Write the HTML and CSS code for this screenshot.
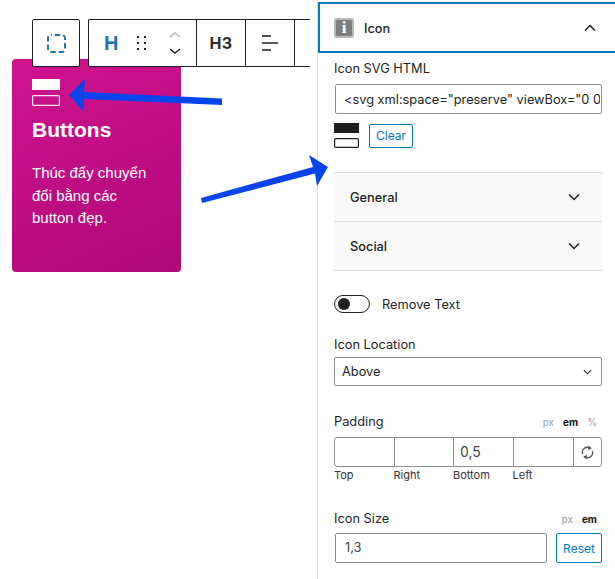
FILE: index.html
```html
<!DOCTYPE html>
<html lang="vi">
<head>
<meta charset="utf-8">
<title>Buttons</title>
<link rel="stylesheet" href="styles.css">
</head>
<body>
<div class="page">
  <main class="canvas">
    <div class="toolbar">
      <div class="tb-group tb-single">
        <svg class="tb-select" viewBox="0 0 19 19" width="19" height="19"><rect x="1" y="1" width="17" height="17" rx="3" fill="none" stroke="#2271b1" stroke-width="2" stroke-dasharray="5.4 3" stroke-dashoffset="4.600"/></svg>
      </div>
      <div class="tb-group tb-main">
        <div class="tb-cell tb-block">
          <span class="tb-h">H</span>
          <svg class="tb-drag" viewBox="0 0 10 14" width="10" height="14"><g fill="#1e1e1e"><rect x="0" y="0" width="2" height="2"/><rect x="7" y="0" width="2" height="2"/><rect x="0" y="6" width="2" height="2"/><rect x="7" y="6" width="2" height="2"/><rect x="0" y="12" width="2" height="2"/><rect x="7" y="12" width="2" height="2"/></g></svg>
          <svg class="tb-move" viewBox="0 0 12 24" width="12" height="24"><path d="M1 6l5-4 5 4" fill="none" stroke="#b4b4b4" stroke-width="1.4"/><path d="M1 18l5 4 5-4" fill="none" stroke="#1e1e1e" stroke-width="1.4"/></svg>
        </div>
        <div class="tb-cell tb-level">H3</div>
        <div class="tb-cell tb-align">
          <svg viewBox="0 0 16 16" width="16" height="16"><path d="M0 1h9M0 8h16M0 15h9" fill="none" stroke="#555" stroke-width="2"/></svg>
        </div>
        <div class="tb-cell tb-rest"></div>
      </div>
    </div>
    <article class="card">
      <svg class="card-icon" viewBox="0 0 28 27" width="28" height="27"><rect x="0" y="0" width="28" height="11" fill="#fff"/><rect x=".6" y="16.600" width="26.8" height="9.8" rx="1" fill="none" stroke="#fff" stroke-width="1.2" opacity=".9"/></svg>
      <h3 class="card-title">Buttons</h3>
      <p class="card-text">Thúc đẩy chuyển đổi bằng các button đẹp.</p>
    </article>
    <svg class="arrows" viewBox="0 0 340 280" width="340" height="280">
      <path d="M222 98.500L84 92L85 79L69 95L83 111L84 99L222 105Z" fill="#0645ea"/>
      <path d="M201 198L313 167L309 155L328 167L317 186L315 173.500L202 203Z" fill="#0645ea"/>
    </svg>
  </main>
  <aside class="sidebar">
    <header class="panel-head">
      <span class="panel-icon">i</span>
      <span class="panel-title">Icon</span>
      <svg class="chev" viewBox="0 0 12 8" width="12" height="8"><path d="M1 6.5l5-5 5 5" fill="none" stroke="#1e1e1e" stroke-width="1.5"/></svg>
    </header>
    <div class="panel-body">
      <label class="label first" for="svg-html">Icon SVG HTML</label>
      <input id="svg-html" class="input svg-input" readonly value='&lt;svg xml:space="preserve" viewBox="0 0 24 24"&gt;'>
      <div class="preview-row">
        <svg viewBox="0 0 25 25" width="25" height="25"><rect x="0" y="0" width="25" height="10" fill="#1e1e1e"/><rect x=".6" y="15.6" width="23.8" height="8.8" rx="1" fill="none" stroke="#1e1e1e" stroke-width="1.2"/></svg>
        <button class="btn clear">Clear</button>
      </div>
      <div class="accordion">
        <div class="acc-row"><span>General</span><svg viewBox="0 0 12 8" width="12" height="8"><path d="M1 1.5l5 5 5-5" fill="none" stroke="#1e1e1e" stroke-width="1.5"/></svg></div>
        <div class="acc-row"><span>Social</span><svg viewBox="0 0 12 8" width="12" height="8"><path d="M1 1.5l5 5 5-5" fill="none" stroke="#1e1e1e" stroke-width="1.5"/></svg></div>
      </div>
      <div class="toggle-row">
        <span class="toggle"><span class="knob"></span></span>
        <span class="toggle-label">Remove Text</span>
      </div>
      <label class="label loc">Icon Location</label>
      <div class="select"><span>Above</span><svg viewBox="0 0 10 6" width="9" height="6"><path d="M1 1l4 4 4-4" fill="none" stroke="#1e1e1e" stroke-width="1.2"/></svg></div>
      <div class="label-row pad-label">
        <span class="label">Padding</span>
        <span class="units"><span>px</span><b>em</b><span>%</span></span>
      </div>
      <div class="pad-box">
        <span class="pad-cell"></span>
        <span class="pad-cell"></span>
        <span class="pad-cell">0,5</span>
        <span class="pad-cell"></span>
        <span class="pad-link"><svg viewBox="0 0 14 16" width="13" height="15"><path d="M2 9.5A5 5 0 0 1 9.5 3.4M12 6.5A5 5 0 0 1 4.500 12.600" fill="none" stroke="#555" stroke-width="1.4"/><path d="M8 .5l3.500 3-3.800 2zM6 15.500l-3.500-3 3.800-2z" fill="#555"/></svg></span>
      </div>
      <div class="pad-names"><span>Top</span><span>Right</span><span>Bottom</span><span>Left</span></div>
      <div class="label-row size-label">
        <span class="label">Icon Size</span>
        <span class="units"><span>px</span><b>em</b></span>
      </div>
      <div class="size-row">
        <div class="input size-input">1,3</div>
        <button class="btn reset">Reset</button>
      </div>
    </div>
  </aside>
</div>
</body>
</html>
```
FILE: styles.css
```css
* { box-sizing: border-box; }
html, body { margin: 0; padding: 0; background: #fff; }
body { font-family: Inter, "Liberation Sans", sans-serif; font-size: 12.8px; color: #1e1e1e; width: 615px; height: 579px; overflow: hidden; }
.page { display: flex; width: 615px; height: 579px; }
.canvas { position: relative; width: 317px; flex: none; padding: 59px 0 0 12px; }
.toolbar { position: absolute; left: 32px; top: 19px; display: flex; gap: 8px; width: 278px; overflow: hidden; z-index: 2; }
.tb-group { height: 48px; background: #fff; border: 1px solid #1e1e1e; border-radius: 2px; display: flex; }
.tb-single { width: 48px; flex: none; align-items: center; justify-content: center; }
.tb-main { flex: 1; border-right: 0; border-radius: 2px 0 0 2px; }
.tb-cell { height: 100%; display: flex; align-items: center; justify-content: center; border-right: 1px solid #1e1e1e; flex: none; }
.tb-block { width: 108px; gap: 0; justify-content: flex-start; padding-left: 15px; }
.tb-h { font-family: "Liberation Sans", sans-serif; font-weight: 700; font-size: 20px; color: #2271b1; width: 33px; }
.tb-drag { margin-right: 22px; }
.tb-level { width: 49px; font-weight: 700; font-size: 16px; color: #2b2b2b; letter-spacing: .4px; }
.tb-align { width: 49px; }
.tb-rest { border: 0; flex: 1; }
.card { width: 169px; height: 213px; border-radius: 4px; background: linear-gradient(155deg, #d0148f 0%, #ae0876 100%); color: #fff; padding: 20px; font-family: "Liberation Sans", sans-serif; }
.card-icon { display: block; }
.card-title { margin: 12px 0 0; font-size: 21px; line-height: 24px; font-weight: 700; }
.card-text { margin: 20px 0 0; font-size: 15px; line-height: 22.500px; width: 125px; }
.arrows { position: absolute; left: 0; top: 0; z-index: 3; pointer-events: none; overflow: visible; }
.sidebar { width: 298px; flex: none; border-left: 1px solid #ddd; }
.panel-head { height: 51px; margin-top: 2px; border: 2px solid #007cba; border-right: 0; display: flex; align-items: center; padding: 1px 0 0 14px; font-weight: 500; }
.panel-icon { width: 20px; height: 20px; border-radius: 3px; background: #7f7f7f; border: 2px solid #b9b9b9; color: #fff; font-family: "Liberation Serif", serif; font-weight: 700; font-size: 17px; line-height: 16px; text-align: center; flex: none; }
.panel-title { margin-left: 10px; flex: 1; }
.chev { margin-right: 19px; }
.panel-body { padding: 0 13px 0 16px; }
.label { display: block; font-size: 12.8px; line-height: 16px; color: #1e1e1e; }
.label.first { margin-top: 8px; }
.input { border: 1px solid #8c8f94; border-radius: 2px; font-size: 12.8px; background: #fff; }
.svg-input { display: block; margin: 7px 0 0 1px; width: 267px; height: 30px; padding: 0 1px 0 8px; font-family: inherit; color: #1e1e1e; outline: 0; }
.preview-row { display: flex; align-items: center; gap: 10px; margin-top: 9px; height: 25px; }
.btn { font-family: inherit; background: #fff; border: 1px solid #007cba; color: #007cba; border-radius: 2px; font-size: 12px; padding: 0; }
.clear { width: 44px; height: 24px; }
.accordion { margin-top: 24px; width: 268px; border-top: 1px solid #ddd; background: #f9f9f9; }
.acc-row { height: 49px; border-bottom: 1px solid #ddd; display: flex; align-items: center; justify-content: space-between; padding: 0 22px 0 16px; font-weight: 500; }
.toggle-row { display: flex; align-items: center; gap: 12px; margin-top: 24px; height: 18px; }
.toggle { width: 36px; height: 18px; border: 1px solid #1e1e1e; border-radius: 9px; position: relative; flex: none; display: block; padding: 2px 3px; }
.knob { display: block; width: 12px; height: 12px; border-radius: 50%; background: #1e1e1e; }
.loc { margin-top: 24px; }
.select { margin-top: 4px; width: 268px; height: 29px; border: 1px solid #8c8f94; border-radius: 2px; display: flex; align-items: center; justify-content: space-between; padding: 0 9px 0 7px; }
.label-row { display: flex; align-items: center; justify-content: space-between; width: 268px; }
.pad-label { margin-top: 28px; }
.units { display: flex; gap: 9px; font-size: 10px; color: #9aa0a6; padding-right: 5px; }
.units b { color: #111; font-weight: 700; }
.pad-box { display: flex; margin-top: 7px; width: 268px; height: 30px; border: 1px solid #8c8f94; border-radius: 3px; }
.pad-cell { width: 60px; border-right: 1px solid #8c8f94; padding-left: 6px; line-height: 28px; font-size: 14px; color: #444; }
.pad-cell:nth-child(2) { width: 59px; }
.pad-link { flex: 1; display: flex; align-items: center; justify-content: center; }
.pad-names { display: flex; font-size: 11px; margin-top: 1px; line-height: 14px; color: #333; }
.pad-names span { width: 59.500px; }
.size-label { margin-top: 29px; }
.size-row { display: flex; gap: 9px; margin-top: 6px; width: 268px; padding-left: 1px; }
.size-input { width: 212px; height: 30px; line-height: 28px; padding-left: 9px; color: #444; }
.reset { width: 46px; height: 30px; }
```
